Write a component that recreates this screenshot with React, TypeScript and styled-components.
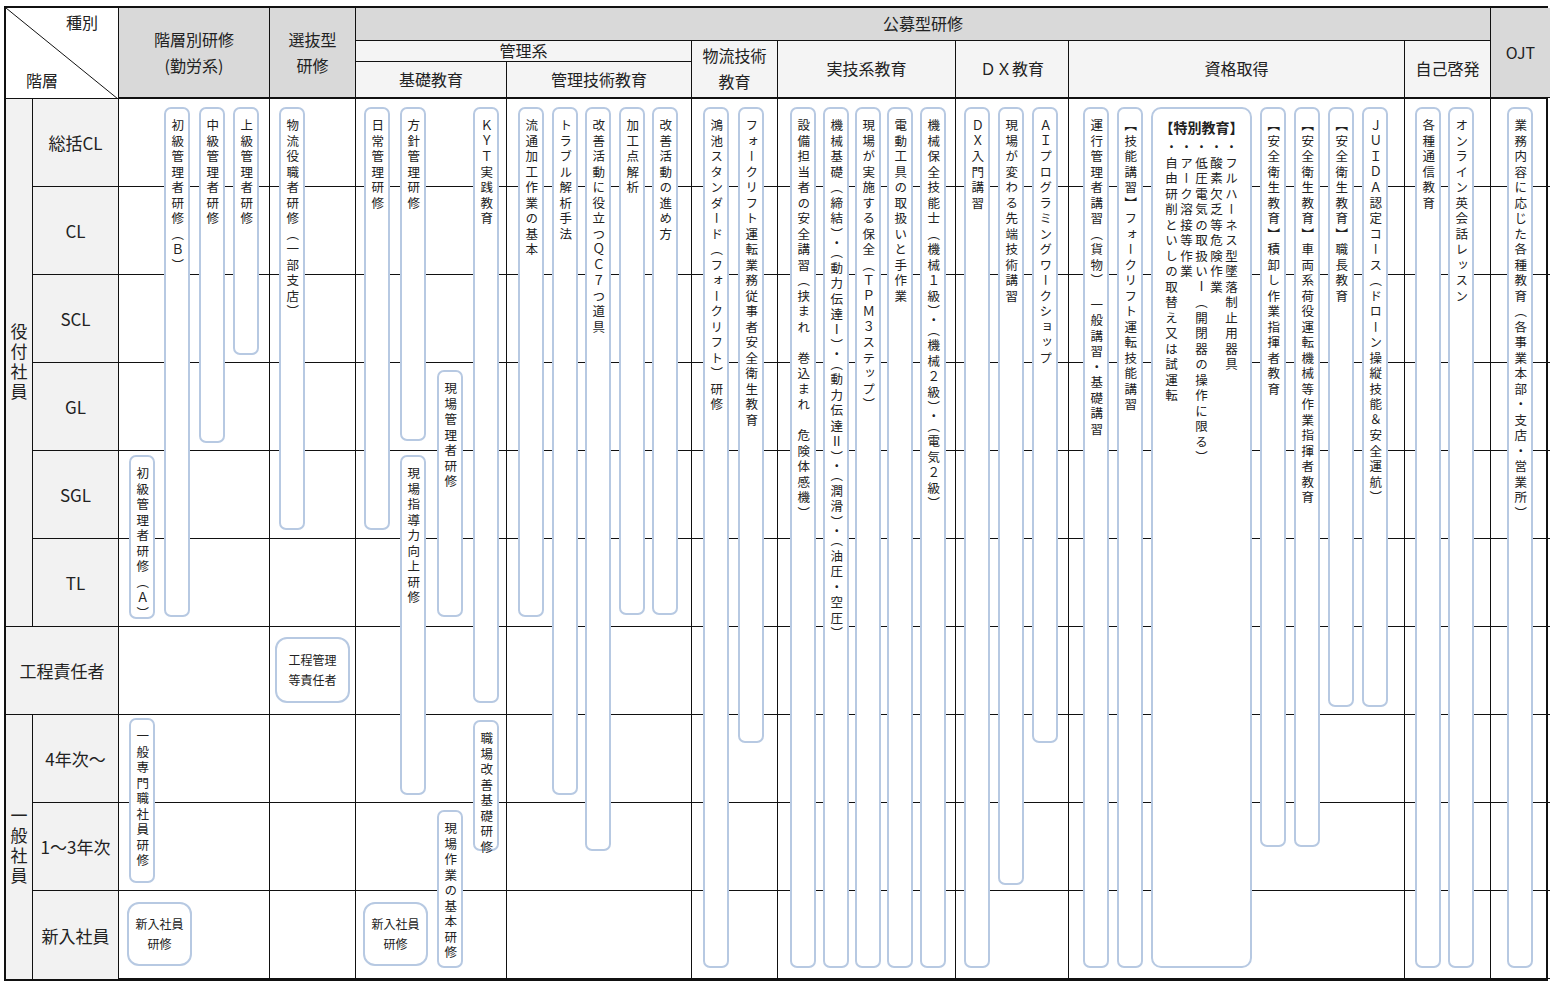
import styled, { createGlobalStyle } from "styled-components";

const GlobalStyle = createGlobalStyle`
  body {
    margin: 0;
    padding: 6px 0 0 4px;
    background: #fff;
    font-family: "Noto Sans CJK JP", "Noto Sans", sans-serif;
    color: #222;
  }
`;

const COLS = "26px 86px 151px 86px 151px 185px 86px 178px 113px 336px 86px 60px";
const ROW_H = 88;
const BODY_TOP = 99;

const Table = styled.div`
  width: 1544px;
  border: 2px solid #111;
  box-sizing: border-box;
`;

const Head = styled.div`
  display: grid;
  grid-template-columns: ${COLS};
  grid-template-rows: 33px 21px 36px;
  border-bottom: 1px solid #111;
`;

const HeadCell = styled.div<{ $grey?: boolean; $col: string; $row: string }>`
  grid-column: ${(p) => p.$col};
  grid-row: ${(p) => p.$row};
  display: flex;
  align-items: center;
  justify-content: center;
  text-align: center;
  font-size: 16px;
  line-height: 1.6;
  background: ${(p) => (p.$grey ? "#d9d9d9" : "#f4f4f4")};
  border-left: 1px solid #111;
  border-bottom: 1px solid #111;
  box-sizing: border-box;
`;

const Diagonal = styled.div`
  position: relative;
  grid-column: 1 / 3;
  grid-row: 1 / 4;
  background: #fff;
  font-size: 16px;
  overflow: hidden;
  svg {
    position: absolute;
    inset: 0;
  }
`;

const KindLabel = styled.span`
  position: absolute;
  left: 60px;
  top: 2px;
`;

const LevelLabel = styled.span`
  position: absolute;
  left: 20px;
  top: 60px;
`;

const Body = styled.div`
  display: grid;
  grid-template-columns: ${COLS};
  grid-template-rows: repeat(10, ${ROW_H}px);
`;

const GroupLabel = styled.div<{ $row: string; $last?: boolean }>`
  grid-column: 1;
  grid-row: ${(p) => p.$row};
  background: #f2f2f2;
  border-bottom: ${(p) => (p.$last ? "none" : "1px solid #111")};
  writing-mode: vertical-rl;
  text-orientation: upright;
  display: flex;
  align-items: center;
  justify-content: center;
  font-size: 17px;
  letter-spacing: 3px;
`;

const RowName = styled.div<{ $row: number; $wide?: boolean }>`
  grid-column: ${(p) => (p.$wide ? "1 / 3" : "2")};
  grid-row: ${(p) => p.$row};
  background: #f2f2f2;
  border-left: ${(p) => (p.$wide ? "none" : "1px solid #111")};
  border-bottom: ${(p) => (p.$row === 10 ? "none" : "1px solid #111")};
  display: flex;
  align-items: center;
  justify-content: center;
  font-size: 17px;
`;

const Lane = styled.div<{ $col: number }>`
  position: relative;
  grid-column: ${(p) => p.$col};
  grid-row: 1 / 11;
  border-left: 1px solid #111;
  background: repeating-linear-gradient(
    to bottom,
    transparent 0 ${ROW_H - 1}px,
    #111 ${ROW_H - 1}px ${ROW_H}px
  );
`;

const Pill = styled.div`
  position: absolute;
  width: 26px;
  box-sizing: border-box;
  background: #fff;
  border: 2px solid #b7c9e2;
  border-radius: 7px;
  padding-top: 10px;
  writing-mode: vertical-rl;
  text-orientation: upright;
  white-space: nowrap;
  display: flex;
  align-items: center;
  font-size: 12.5px;
  letter-spacing: 3px;
  line-height: 1;
`;

const Box = styled.div<{ $l: number; $t: number; $w: number; $h: number }>`
  position: absolute;
  left: ${(p) => p.$l}px;
  top: ${(p) => p.$t}px;
  width: ${(p) => p.$w}px;
  height: ${(p) => p.$h}px;
  box-sizing: border-box;
  background: #fff;
  border: 2px solid #b7c9e2;
  border-radius: 12px;
  display: flex;
  align-items: center;
  justify-content: center;
  text-align: center;
  font-size: 12px;
  line-height: 1.65;
`;

const Special = styled.div`
  position: absolute;
  left: 82px;
  top: 8px;
  width: 101px;
  height: 861px;
  box-sizing: border-box;
  background: #fff;
  border: 2px solid #b7c9e2;
  border-radius: 10px;
  padding-top: 8px;
  display: flex;
  flex-direction: column;
  align-items: center;
  h4 {
    margin: 0;
    font-size: 14px;
    font-weight: 700;
  }
`;

const SpecialLines = styled.div`
  writing-mode: vertical-rl;
  text-orientation: upright;
  font-size: 12.5px;
  letter-spacing: 3px;
  line-height: 15px;
  margin-top: 4px;
`;

type P = [number, number, number, string];

// [left within lane, top y, bottom y (screen coords), text]
const lanes: { col: number; pills: P[] }[] = [
  {
    col: 3,
    pills: [
      [45, 107, 617, "初級管理者研修（Ｂ）"],
      [80, 107, 443, "中級管理者研修"],
      [114, 107, 355, "上級管理者研修"],
      [10, 455, 619, "初級管理者研修（Ａ）"],
      [10, 718, 883, "一般専門職社員研修"],
    ],
  },
  { col: 4, pills: [[9, 107, 530, "物流役職者研修（一部支店）"]] },
  {
    col: 5,
    pills: [
      [8, 107, 530, "日常管理研修"],
      [44, 107, 441, "方針管理研修"],
      [44, 455, 795, "現場指導力向上研修"],
      [117, 107, 703, "ＫＹＴ実践教育"],
      [81, 370, 617, "現場管理者研修"],
      [117, 720, 851, "職場改善基礎研修"],
      [81, 810, 968, "現場作業の基本研修"],
    ],
  },
  {
    col: 6,
    pills: [
      [11, 107, 617, "流通加工作業の基本"],
      [45, 107, 795, "トラブル解析手法"],
      [78, 107, 851, "改善活動に役立つＱＣ７つ道具"],
      [112, 107, 615, "加工点解析"],
      [145, 107, 615, "改善活動の進め方"],
    ],
  },
  {
    col: 7,
    pills: [
      [11, 107, 968, "鴻池スタンダード（フォークリフト）研修"],
      [46, 107, 743, "フォークリフト運転業務従事者安全衛生教育"],
    ],
  },
  {
    col: 8,
    pills: [
      [12, 107, 968, "設備担当者の安全講習（挟まれ 巻込まれ 危険体感機）"],
      [45, 107, 968, "機械基礎（締結）・（動力伝達Ⅰ）・（動力伝達Ⅱ）・（潤滑）・（油圧・空圧）"],
      [77, 107, 968, "現場が実施する保全（ＴＰＭ３ステップ）"],
      [109, 107, 968, "電動工具の取扱いと手作業"],
      [142, 107, 968, "機械保全技能士（機械１級）・（機械２級）・（電気２級）"],
    ],
  },
  {
    col: 9,
    pills: [
      [8, 107, 968, "ＤＸ入門講習"],
      [42, 107, 885, "現場が変わる先端技術講習"],
      [76, 107, 743, "ＡＩプログラミングワークショップ"],
    ],
  },
  {
    col: 10,
    pills: [
      [14, 107, 968, "運行管理者講習（貨物）　一般講習・基礎講習"],
      [48, 107, 968, "【技能講習】フォークリフト運転技能講習"],
      [191, 107, 847, "【安全衛生教育】積卸し作業指揮者教育"],
      [225, 107, 847, "【安全衛生教育】車両系荷役運転機械等作業指揮者教育"],
      [259, 107, 707, "【安全衛生教育】職長教育"],
      [293, 107, 707, "ＪＵＩＤＡ認定コース（ドローン操縦技能＆安全運航）"],
    ],
  },
  {
    col: 11,
    pills: [
      [10, 107, 968, "各種通信教育"],
      [43, 107, 968, "オンライン英会話レッスン"],
    ],
  },
  { col: 12, pills: [[16, 107, 968, "業務内容に応じた各種教育（各事業本部・支店・営業所）"]] },
];

const rows = ["総括CL", "CL", "SCL", "GL", "SGL", "TL", "工程責任者", "4年次～", "1～3年次", "新入社員"];

const specials = [
  "・フルハーネス型墜落制止用器具",
  "・酸素欠乏等危険作業",
  "・低圧電気の取扱いⅠ（開閉器の操作に限る）",
  "・アーク溶接等作業",
  "・自由研削といしの取替え又は試運転",
];

export default function App() {
  return (
    <>
      <GlobalStyle />
      <Table>
        <Head>
          <Diagonal>
            <svg width="112" height="91">
              <line x1="0" y1="0" x2="112" y2="91" stroke="#111" strokeWidth="1" />
            </svg>
            <KindLabel>種別</KindLabel>
            <LevelLabel>階層</LevelLabel>
          </Diagonal>
          <HeadCell $grey $col="3" $row="1 / 4">
            階層別研修
            <br />
            (勤労系)
          </HeadCell>
          <HeadCell $grey $col="4" $row="1 / 4">
            選抜型
            <br />
            研修
          </HeadCell>
          <HeadCell $grey $col="5 / 12" $row="1">
            公募型研修
          </HeadCell>
          <HeadCell $col="5 / 7" $row="2">
            管理系
          </HeadCell>
          <HeadCell $col="5" $row="3">
            基礎教育
          </HeadCell>
          <HeadCell $col="6" $row="3">
            管理技術教育
          </HeadCell>
          <HeadCell $col="7" $row="2 / 4">
            物流技術
            <br />
            教育
          </HeadCell>
          <HeadCell $col="8" $row="2 / 4">
            実技系教育
          </HeadCell>
          <HeadCell $col="9" $row="2 / 4">
            ＤＸ教育
          </HeadCell>
          <HeadCell $col="10" $row="2 / 4">
            資格取得
          </HeadCell>
          <HeadCell $col="11" $row="2 / 4">
            自己啓発
          </HeadCell>
          <HeadCell $grey $col="12" $row="1 / 4">
            OJT
          </HeadCell>
        </Head>
        <Body>
          <GroupLabel $row="1 / 7">役付社員</GroupLabel>
          <GroupLabel $row="8 / 11" $last>
            一般社員
          </GroupLabel>
          {rows.map((r, i) => (
            <RowName key={r} $row={i + 1} $wide={i === 6}>
              {r}
            </RowName>
          ))}
          {lanes.map((lane) => (
            <Lane key={lane.col} $col={lane.col}>
              {lane.pills.map(([l, t, b, text]) => (
                <Pill key={text + t} style={{ left: l, top: t - BODY_TOP, height: b - t }}>
                  {text}
                </Pill>
              ))}
              {lane.col === 3 && (
                <Box $l={8} $t={803} $w={65} $h={64}>
                  新入社員
                  <br />
                  研修
                </Box>
              )}
              {lane.col === 4 && (
                <Box $l={5} $t={538} $w={75} $h={66}>
                  工程管理
                  <br />
                  等責任者
                </Box>
              )}
              {lane.col === 5 && (
                <Box $l={7} $t={803} $w={65} $h={64}>
                  新入社員
                  <br />
                  研修
                </Box>
              )}
              {lane.col === 10 && (
                <Special>
                  <h4>【特別教育】</h4>
                  <SpecialLines>
                    {specials.map((s) => (
                      <div key={s}>{s}</div>
                    ))}
                  </SpecialLines>
                </Special>
              )}
            </Lane>
          ))}
        </Body>
      </Table>
    </>
  );
}
